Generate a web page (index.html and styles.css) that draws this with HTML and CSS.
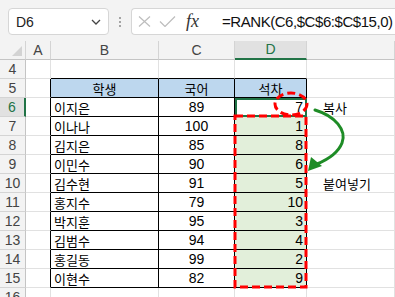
FILE: index.html
```html
<html>

<head>
    <title>RANK</title>
    <link rel="stylesheet" href="styles.css">
</head>

<body>
    <div class="toolbar">
        <div class="namebox">
            <span>D6</span>
            <svg class="chev" width="10" height="6" viewBox="0 0 10 6"><path d="M1 1L5 5L9 1" fill="none" stroke="#444" stroke-width="1.3" /></svg>
        </div>
        <div class="dots"><i></i><i></i><i></i></div>
        <div class="fbox">
            <svg class="ico" width="13" height="11" viewBox="0 0 13 11"><path d="M1 0.5L12 10.5M12 0.5L1 10.5" stroke="#bdbdbd" stroke-width="1.2" /></svg>
            <svg class="ico" width="17" height="11" viewBox="0 0 17 11"><path d="M1 5.5L6 10.5L16 0.5" fill="none" stroke="#bdbdbd" stroke-width="1.2" /></svg>
            <span class="fx">fx</span>
            <span class="formula">=RANK(C6,$C$6:$C$15,0)</span>
        </div>
    </div>

    <table class="sheet">
        <colgroup>
            <col style="width:26px"><col style="width:25px"><col style="width:108px"><col style="width:76px"><col style="width:72px"><col>
        </colgroup>
        <tr class="colhead">
            <td class="corner"><span class="tri"></span></td><td>A</td><td>B</td><td>C</td><td class="on">D</td><td></td>
        </tr>
        <tr>
            <td class="rh">4</td><td></td><td class="tb"></td><td class="tb"></td><td class="tb"></td><td></td>
        </tr>
        <tr>
            <td class="rh">5</td><td class="tl"></td><td class="hd">학생</td><td class="hd">국어</td><td class="hd">석차</td><td></td>
        </tr>
        <tr>
            <td class="rh on">6</td><td class="tl"></td><td class="tx">이지은</td><td class="nm">89</td><td class="rk sel">7</td><td class="note">복사</td>
        </tr>
        <tr>
            <td class="rh">7</td><td class="tl"></td><td class="tx">이나나</td><td class="nm">100</td><td class="rk fill">1</td><td></td>
        </tr>
        <tr>
            <td class="rh">8</td><td class="tl"></td><td class="tx">김지은</td><td class="nm">85</td><td class="rk fill">8</td><td></td>
        </tr>
        <tr>
            <td class="rh">9</td><td class="tl"></td><td class="tx">이민수</td><td class="nm">90</td><td class="rk fill">6</td><td></td>
        </tr>
        <tr>
            <td class="rh">10</td><td class="tl"></td><td class="tx">김수현</td><td class="nm">91</td><td class="rk fill">5</td><td class="note">붙여넣기</td>
        </tr>
        <tr>
            <td class="rh">11</td><td class="tl"></td><td class="tx">홍지수</td><td class="nm">79</td><td class="rk fill">10</td><td></td>
        </tr>
        <tr>
            <td class="rh">12</td><td class="tl"></td><td class="tx">박지훈</td><td class="nm">95</td><td class="rk fill">3</td><td></td>
        </tr>
        <tr>
            <td class="rh">13</td><td class="tl"></td><td class="tx">김범수</td><td class="nm">94</td><td class="rk fill">4</td><td></td>
        </tr>
        <tr>
            <td class="rh">14</td><td class="tl"></td><td class="tx">홍길동</td><td class="nm">99</td><td class="rk fill">2</td><td></td>
        </tr>
        <tr>
            <td class="rh">15</td><td class="tl"></td><td class="tx">이현수</td><td class="nm">82</td><td class="rk fill">9</td><td></td>
        </tr>
        <tr>
            <td class="rh">16</td><td></td><td></td><td></td><td></td><td></td>
        </tr>
    </table>

    <!-- 복사 / 붙여넣기 표시 -->
    <svg class="marks" width="395" height="297" viewBox="0 0 395 297">
        <ellipse cx="291" cy="104" rx="16" ry="11" fill="none" stroke="#ff0000" stroke-width="3" stroke-dasharray="8 4" />
        <rect x="235" y="116" width="71" height="171" fill="none" stroke="#ff0000" stroke-width="3" stroke-dasharray="8 4" />
        <path d="M315 110C335 116 347 130 342 143C338 153 329 159 317 164" fill="none" stroke="#1e8c26" stroke-width="3" stroke-linecap="round" />
        <polygon points="308,171 311,157 322,166" fill="#1e8c26" />
    </svg>
</body>

</html>
```

FILE: styles.css
```css
* {
    box-sizing: border-box;
    margin: 0;
    padding: 0;
}

body {
    width: 395px;
    height: 297px;
    overflow: hidden;
    background: #ffffff;
    font-family: "Liberation Sans", "Noto Sans CJK KR", sans-serif;
    position: relative;
}

/* 이름 상자 + 수식 입력줄 */
.toolbar {
    height: 41px;
    background: #f3f3f3;
    display: flex;
    align-items: flex-start;
    padding: 8px 0 0 8px;
}

.namebox {
    width: 101px;
    height: 27px;
    background: #ffffff;
    border: 1px solid #d6d6d6;
    border-radius: 4px;
    display: flex;
    align-items: center;
    justify-content: space-between;
    padding: 0 7px 0 7px;
    font-size: 14px;
    color: #222;
}

.dots {
    width: 22px;
    height: 27px;
    display: flex;
    flex-direction: column;
    align-items: center;
    justify-content: center;
    gap: 2px;
}

.dots i {
    width: 2px;
    height: 2px;
    background: #8a8a8a;
    border-radius: 1px;
}

.fbox {
    flex: 1;
    height: 27px;
    background: #ffffff;
    border: 1px solid #d6d6d6;
    border-right: none;
    border-radius: 4px 0 0 4px;
    display: flex;
    align-items: center;
    padding-left: 6px;
    gap: 8px;
}

.fx {
    font-family: "Liberation Serif", serif;
    font-style: italic;
    font-size: 18px;
    color: #333;
    margin-left: 2px;
    width: 28px;
}

.formula {
    font-size: 15px;
    letter-spacing: -0.45px;
    color: #111;
}

/* 시트 */
.sheet {
    width: 395px;
    table-layout: fixed;
    border-spacing: 0;
    border-collapse: separate;
    font-size: 14px;
}

.sheet td {
    height: 19px;
    padding: 0 3px;
    border-right: 1px solid #e1e1e1;
    border-bottom: 1px solid #e1e1e1;
    line-height: 17px;
    white-space: nowrap;
    overflow: visible;
    color: #000;
}

.colhead td {
    height: 18px;
    background: #f3f3f3;
    text-align: center;
    color: #444;
    font-size: 14px;
    border-right-color: #d4d4d4;
    border-bottom-color: #c4c4c4;
}

.colhead td.on {
    background: #e1e1e1;
    color: #217346;
    border-bottom: 2px solid #217346;
}

.corner {
    position: relative;
}

.tri {
    position: absolute;
    right: 3px;
    bottom: 3px;
    width: 0;
    height: 0;
    border-left: 10px solid transparent;
    border-bottom: 10px solid #d3d3d3;
}

.sheet td.rh {
    background: #f3f3f3;
    text-align: center;
    color: #444;
    padding: 0;
    border-right-color: #c4c4c4;
    border-bottom-color: #d4d4d4;
}

.sheet td.rh.on {
    background: #e1e1e1;
    color: #217346;
    border-right: 2px solid #217346;
}

/* 표 테두리 */
.sheet td.tb {
    border-bottom-color: #000;
}

.sheet td.tl {
    border-right-color: #000;
}

.sheet td.hd,
.sheet td.tx,
.sheet td.nm,
.sheet td.rk {
    border-right-color: #000;
    border-bottom-color: #000;
}

.hd {
    background: #bdd7ee;
    text-align: center;
    font-family: "Noto Sans CJK KR", sans-serif;
    font-size: 13px;
}

.tx {
    font-family: "Noto Sans CJK KR", sans-serif;
    font-size: 13px;
}

.nm {
    text-align: center;
}

.rk {
    text-align: right;
}

.fill {
    background: #e2efda;
}

.sel {
    outline: 2px solid #217346;
    outline-offset: -2px;
}

.note {
    font-family: "Noto Sans CJK KR", sans-serif;
    font-size: 13px;
    padding-left: 16px !important;
}

.marks {
    position: absolute;
    left: 0;
    top: 0;
    pointer-events: none;
}
```
